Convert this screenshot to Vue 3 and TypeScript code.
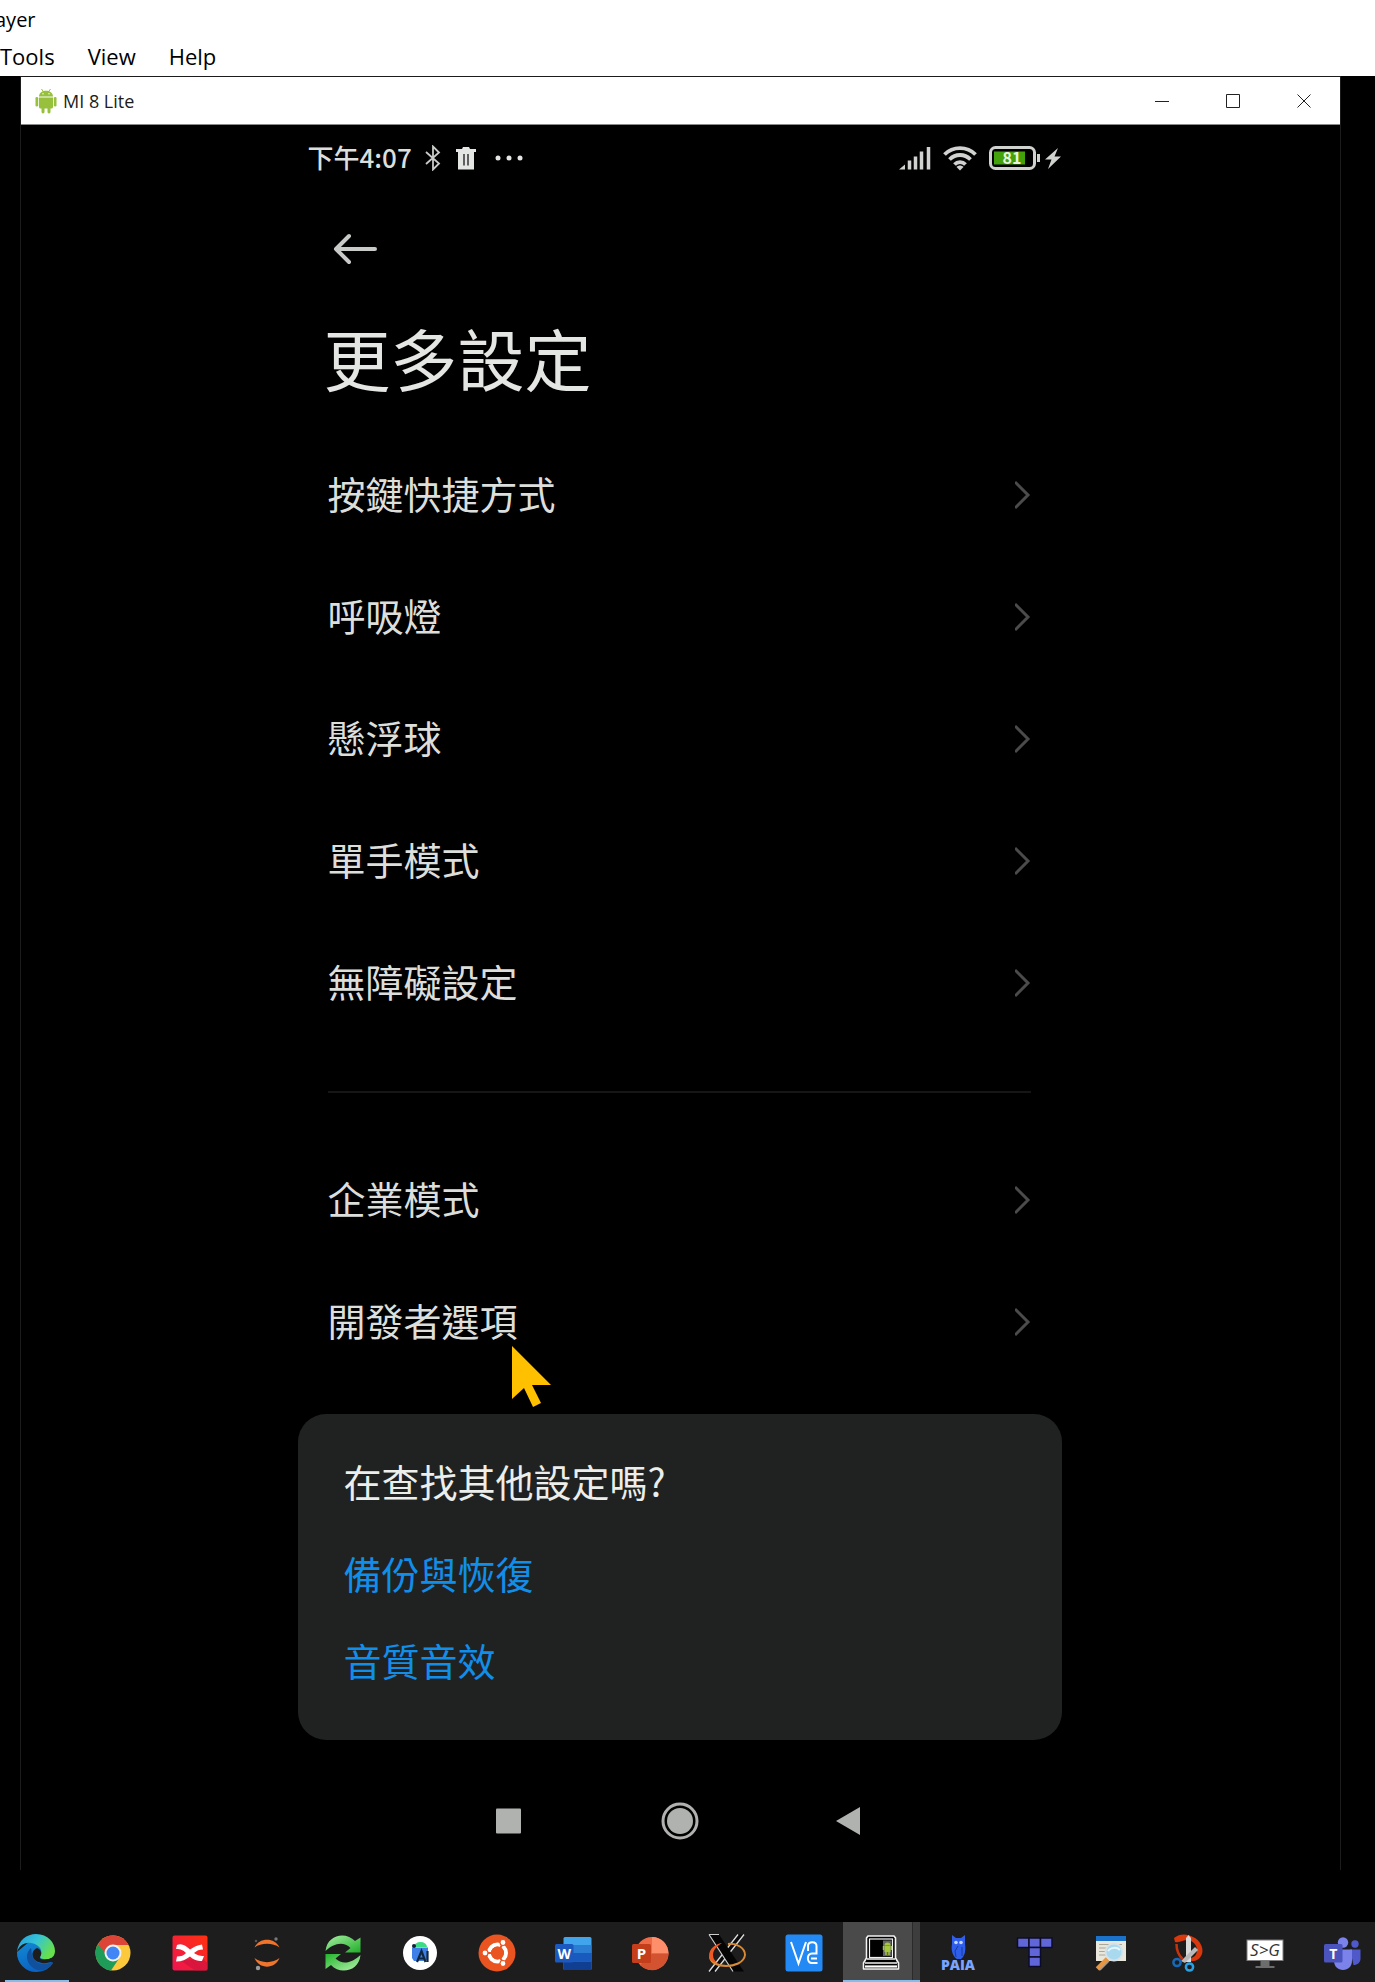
<script setup lang="ts">
interface MenuEntry {
  label: string
  pointed?: boolean
}

const appMenu: string[] = ['Tools', 'View', 'Help']

const groups: MenuEntry[][] = [
  [
    { label: '按鍵快捷方式' },
    { label: '呼吸燈' },
    { label: '懸浮球' },
    { label: '單手模式' },
    { label: '無障礙設定' },
  ],
  [{ label: '企業模式' }, { label: '開發者選項', pointed: true }],
]

const suggestions: string[] = ['備份與恢復', '音質音效']
</script>

<template>
  <div class="desktop">
    <header class="player">
      <div class="player-title">ayer</div>
      <nav class="player-menu">
        <button v-for="item in appMenu" :key="item" type="button">{{ item }}</button>
      </nav>
    </header>

    <main class="window">
      <div class="titlebar">
        <svg class="droid" viewBox="0 0 22 26" aria-hidden="true">
          <g fill="#97c03d">
            <path d="M4 8.500C4 0.800 18 0.800 18 8.500z" />
            <path d="M4 9.500h14v9.500a1.500 1.500 0 0 1-1.500 1.500h-11A1.500 1.500 0 0 1 4 19z" />
            <rect x="0.500" y="9" width="2.700" height="9.500" rx="1.300" />
            <rect x="18.800" y="9" width="2.700" height="9.500" rx="1.300" />
            <rect x="6.500" y="18" width="3" height="7.500" rx="1.400" />
            <rect x="12.500" y="18" width="3" height="7.500" rx="1.400" />
          </g>
          <path d="M6.500 1l1.800 2.500M15.500 1l-1.800 2.500" stroke="#97c03d" stroke-width="1" />
          <circle cx="8" cy="5.800" r="0.700" fill="#fff" />
          <circle cx="14" cy="5.800" r="0.700" fill="#fff" />
        </svg>
        <span class="window-name">MI 8 Lite</span>
        <div class="window-buttons">
          <button type="button" aria-label="Minimize">
            <svg viewBox="0 0 14 14"><path d="M0 7.500h14" /></svg>
          </button>
          <button type="button" aria-label="Maximize">
            <svg viewBox="0 0 14 14"><path d="M.5.500h13v13H.5z" /></svg>
          </button>
          <button type="button" aria-label="Close">
            <svg viewBox="0 0 14 14"><path d="M.5.500l13 13M13.500.500l-13 13" /></svg>
          </button>
        </div>
      </div>

      <div class="phone">
        <div class="status">
          <span class="clock">下午4:07</span>
          <svg class="bt" width="18" height="26" viewBox="0 0 18 26" aria-hidden="true">
            <path d="M2 7l13 11.500-6 6V1.500l6 6L2 19" fill="none" stroke="#c9cbc9" stroke-width="1.800" />
          </svg>
          <svg class="trash" width="22" height="24" viewBox="0 0 22 24" aria-hidden="true">
            <path d="M1 3h6l1-2h6l1 2h6v3H1z" fill="#e4e6e4" />
            <path d="M3 5h16v18.500H3z" fill="#e4e6e4" />
            <path d="M9 8v11.500M13 8v11.500" stroke="#333" stroke-width="1.500" />
          </svg>
          <svg class="dots" width="28" height="6" viewBox="0 0 28 6" aria-hidden="true">
            <g fill="#e4e6e4">
              <circle cx="3" cy="3" r="2.500" />
              <circle cx="14" cy="3" r="2.500" />
              <circle cx="25" cy="3" r="2.500" />
            </g>
          </svg>
          <div class="status-right">
            <svg width="32" height="24" viewBox="0 0 32 24" aria-hidden="true">
              <path d="M0 23.500l6-5v5z" fill="#d0d2d0" />
              <path d="M10.500 23.500v-9M16.500 23.500v-13M22.500 23.500V5.500M29.500 23.500V1" stroke="#d0d2d0" stroke-width="3.500" />
            </svg>
            <svg width="34" height="26" viewBox="0 0 34 26" aria-hidden="true">
              <g fill="none" stroke="#d0d2d0" stroke-width="3.800">
                <path d="M1.500 9.500C10 1 24 1 32.500 9.500" />
                <path d="M6.500 14.500c6-6 15-6 21 0" />
                <path d="M11.500 19.500c3-3.200 8-3.200 11 0" />
              </g>
              <path d="M17 25.500l-3.500-3.500c2-2 5-2 7 0z" fill="#d0d2d0" />
            </svg>
            <svg width="52" height="24" viewBox="0 0 52 24" aria-hidden="true">
              <rect x="1.500" y="1.500" width="44" height="21" rx="5" fill="none" stroke="#d0d2d0" stroke-width="3" />
              <rect x="5" y="5.500" width="31" height="13" fill="#43a10c" />
              <path d="M49.500 8v8" stroke="#d0d2d0" stroke-width="3" />
              <text x="23" y="17.500" text-anchor="middle" font-size="16" font-weight="700" fill="#e8f5e0">81</text>
            </svg>
            <svg width="16" height="24" viewBox="0 0 16 24" aria-hidden="true">
              <path d="M13 2L0 13.500h6.500L3 23 16 10.500H9.500z" fill="#d0d2d0" />
            </svg>
          </div>
        </div>

        <button class="back" type="button" aria-label="返回">
          <svg width="46" height="32" viewBox="0 0 46 32">
            <path d="M17 3L4 16l13 13M4 16h39" />
          </svg>
        </button>

        <h1>更多設定</h1>

        <ul v-for="(group, g) in groups" :key="g" class="group">
          <li v-for="entry in group" :key="entry.label">
            <a href="#">
              <span>{{ entry.label }}</span>
              <svg width="16" height="30" viewBox="0 0 16 30" aria-hidden="true">
                <path d="M0 2l13 13L0 28" />
              </svg>
            </a>
            <svg v-if="entry.pointed" class="pointer" width="40" height="62" viewBox="0 0 40 62" aria-hidden="true">
              <path d="M0 0v53l12-11 9 19 8-4-9-18h19z" fill="#ffc000" />
            </svg>
          </li>
        </ul>

        <section class="card">
          <h2>在查找其他設定嗎?</h2>
          <a v-for="s in suggestions" :key="s" href="#">{{ s }}</a>
        </section>

        <nav class="keys">
          <button type="button" aria-label="Recents">
            <svg viewBox="0 0 38 38"><rect x="6" y="6.500" width="25" height="25" rx="1" /></svg>
          </button>
          <button type="button" aria-label="Home">
            <svg viewBox="0 0 38 38">
              <circle cx="19" cy="19" r="13" />
              <circle class="ring" cx="19" cy="19" r="17" />
            </svg>
          </button>
          <button type="button" aria-label="Back">
            <svg viewBox="0 0 38 38"><path d="M4 19L28 5v28z" /></svg>
          </button>
        </nav>
      </div>
    </main>

    <footer class="taskbar">
      <button type="button" class="running" aria-label="Edge">
        <svg viewBox="0 0 40 40">
          <defs>
            <linearGradient id="edgeTop" x1="0" y1="0" x2="1" y2="0.500">
              <stop offset="0" stop-color="#249ad8" />
              <stop offset="0.500" stop-color="#35c3d8" />
              <stop offset="1" stop-color="#66e04c" />
            </linearGradient>
            <linearGradient id="edgeLow" x1="0" y1="0" x2="0.400" y2="1">
              <stop offset="0" stop-color="#1491d8" />
              <stop offset="1" stop-color="#0b62c0" />
            </linearGradient>
          </defs>
          <path d="M1 19a19 19 0 0 0 19 20c8 0 14-4 17-9l-8-4 8-8L20 3z" fill="url(#edgeLow)" />
          <path d="M1 19C2 7 11 1 20 1c12 0 19 9 19 17 0 6-5 9-10 8-4 0-6-1-4-4 2-6-3-11-10-12C8 9 3 13 1 19z" fill="url(#edgeTop)" />
          <path d="M15 15c-6 5-5 14 1 19 5 4 10 4 14 2 4-2 6-4 7-7-8 4-17 2-20-4-2-4-1-7-2-10z" fill="#11509c" />
          <path d="M21 15c-5 2-6 8-2 12 5 4 12 4 18 1l2-2-4-1c-3 2-8 2-10 1-2-1-1-2 0-4 1-3-1-6-4-7z" fill="#1d1d1d" />
        </svg>
      </button>
      <button type="button" aria-label="Chrome">
        <svg viewBox="0 0 40 40">
          <circle cx="20" cy="20" r="17.500" fill="#fcc93c" />
          <path d="M20 20L4.800 11.200A17.500 17.500 0 0 0 18 37.400L27 24z" fill="#1f9d58" />
          <path d="M20 20h-8L5 11A17.500 17.500 0 0 1 35.500 12H20z" fill="#db4437" />
          <circle cx="20" cy="20" r="8.500" fill="#f1f1f1" />
          <circle cx="20" cy="20" r="6.500" fill="#4285f4" />
        </svg>
      </button>
      <button type="button" aria-label="XMind">
        <svg viewBox="0 0 40 40">
          <defs>
            <linearGradient id="xm" x1="0" y1="1" x2="1" y2="0">
              <stop offset="0" stop-color="#ee1450" />
              <stop offset="1" stop-color="#ff3110" />
            </linearGradient>
          </defs>
          <rect x="2.500" y="2.500" width="35" height="35" rx="2" fill="url(#xm)" />
          <path d="M33 26l4.500 4v7.500H25L10 27z" fill="#c80f42" opacity="0.600" />
          <path d="M7 12c5-2 9 1 13 4.500 4-2.500 7-4.500 12-5l1 5c-4 0-6 1-9 3.500 3 2 5 3 10 3l-2 5c-5 0-8-1-12-4.500-4 3-8 5-14 5l1-5c4 0 7-1 9-3.500-3-3-5-4-10-4z" fill="#fff" />
        </svg>
      </button>
      <button type="button" aria-label="Jupyter">
        <svg viewBox="0 0 40 40">
          <path d="M7.500 14.500C12 4 28 4 32.500 14.500 26 9.500 14 9.500 7.500 14.500zM7.500 25C12 36.500 28 36.500 32.500 25 26 30.500 14 30.500 7.500 25z" fill="#f0742c" />
          <circle cx="29" cy="6" r="1.700" fill="#77787b" />
          <circle cx="9" cy="8" r="1.300" fill="#55565a" />
          <circle cx="11" cy="35" r="2.200" fill="#9a9b9d" />
        </svg>
      </button>
      <button type="button" aria-label="Sync">
        <svg viewBox="0 0 40 40">
          <defs>
            <linearGradient id="syncA" x1="0" y1="0" x2="1" y2="1">
              <stop offset="0" stop-color="#a9f0a4" />
              <stop offset="1" stop-color="#1fae28" />
            </linearGradient>
            <linearGradient id="syncB" x1="0" y1="0" x2="1" y2="1">
              <stop offset="0" stop-color="#22b52b" />
              <stop offset="1" stop-color="#b6f2ad" />
            </linearGradient>
          </defs>
          <path d="M2.500 18C4 1.500 23-2 32 8l5.500-3.500v15H22l5.500-4.500C20 7.500 10 11 2.500 18z" fill="url(#syncA)" />
          <path d="M37.500 22C36 38.500 17 42 8 32l-5.500 4V21H18l-5.500 4.500C20 33 30 29 37.500 22z" fill="url(#syncB)" />
        </svg>
      </button>
      <button type="button" aria-label="Android Studio">
        <svg viewBox="0 0 40 40">
          <circle cx="20" cy="20" r="17" fill="#fff" />
          <path d="M14 14a6.500 5 0 0 1 13 0z" fill="#3ddc84" />
          <path d="M12 14.500h16V27l-5 1H14l-2-3z" fill="#3f7fe8" />
          <circle cx="14" cy="13" r="2" fill="#123" />
          <path d="M17 29l4.500-11 4 11M18.500 25.500h6M27.500 18v11" fill="none" stroke="#10283f" stroke-width="2.200" />
        </svg>
      </button>
      <button type="button" aria-label="Ubuntu">
        <svg viewBox="0 0 40 40">
          <circle cx="20" cy="20" r="18.500" fill="#e95420" />
          <circle cx="20.500" cy="20" r="8.500" fill="none" stroke="#fff" stroke-width="4" />
          <path d="M20.500 20H4M20.500 20l9-16M20.500 20l9 16" stroke="#e95420" stroke-width="2" />
          <circle cx="20.500" cy="20" r="6.500" fill="#e95420" />
          <g fill="#fff" stroke="#e95420" stroke-width="1.200">
            <circle cx="8" cy="20" r="3" />
            <circle cx="26" cy="9.500" r="3" />
            <circle cx="26" cy="30.500" r="3" />
          </g>
        </svg>
      </button>
      <button type="button" aria-label="Word">
        <svg viewBox="0 0 40 40">
          <rect x="10.500" y="4" width="28" height="33" rx="1.500" fill="#41a5ee" />
          <path d="M10.500 12h28v8h-28z" fill="#2b7cd3" />
          <path d="M10.500 20h28v8.500h-28z" fill="#185abd" />
          <path d="M10.500 28.500h28V36a1 1 0 0 1-1 1h-26a1 1 0 0 1-1-1z" fill="#103f91" />
          <rect x="2" y="11" width="18.500" height="18.500" rx="1.500" fill="#1c59bf" />
          <text x="11.200" y="25.500" text-anchor="middle" font-size="14" font-weight="700" fill="#fff">W</text>
        </svg>
      </button>
      <button type="button" aria-label="PowerPoint">
        <svg viewBox="0 0 40 40">
          <circle cx="22" cy="20.500" r="16.500" fill="#ed6c47" />
          <path d="M22 4a16.500 16.500 0 0 1 16.500 16.500H22z" fill="#ff8f6b" />
          <path d="M22 20.500h16.500A16.500 16.500 0 0 1 10 32z" fill="#d35230" />
          <rect x="2" y="11" width="19" height="19" rx="1.500" fill="#c43e1c" />
          <text x="11.500" y="26" text-anchor="middle" font-size="15" font-weight="700" fill="#fff">P</text>
        </svg>
      </button>
      <button type="button" aria-label="X server">
        <svg viewBox="0 0 40 40">
          <path d="M31 1.500h6L8 38.500H2z" fill="#0a0a0a" />
          <path d="M31 1.500L2 38.500M37 1.500L8 38.500" stroke="#ddd" stroke-width="1.300" />
          <path d="M2 1.500h10l25 37H26z" fill="#050505" />
          <path d="M2 1.500L26 38.500M2 1.500h10" stroke="#ccc" stroke-width="1.200" />
          <path d="M21 11c9-1 17 4 17 11C37 30 27 33 19 33 11 33 4 30 3 24" fill="none" stroke="#d98a35" stroke-width="2" />
          <path d="M2 23c0-7 6-12 13-13-5 3-9 7-9 12 0 4 2 6 5 8-5-1-9-3-9-7z" fill="#ee5a24" />
        </svg>
      </button>
      <button type="button" aria-label="VNC">
        <svg viewBox="0 0 40 40">
          <rect x="1.500" y="1.500" width="37" height="37" rx="2.500" fill="#2389f5" />
          <path d="M7 9l7.500 21.500L22 9" fill="none" stroke="#fff" stroke-width="2" />
          <path d="M24 18v-5c0-5 8.500-5 8.500 0v7.500h-4.500c-5.500 0-5.500 9.500 0 9.500h5.500M27 25.500h6" fill="none" stroke="#fff" stroke-width="2" />
        </svg>
      </button>
      <button type="button" class="active" aria-label="Screen mirror">
        <svg viewBox="0 0 40 40">
          <path d="M7 3h26l1.500 2v20l3 5v6H2.500v-6l3-5V5z" fill="#000" stroke="#f2f2f2" stroke-width="1.600" stroke-linejoin="round" />
          <rect x="8.500" y="6" width="23" height="18.500" fill="#000" stroke="#f2f2f2" stroke-width="1.200" />
          <rect x="22" y="7.500" width="8.500" height="15.500" fill="#646464" />
          <path d="M4 30h32M6 26h28" stroke="#f2f2f2" stroke-width="1.600" />
          <path d="M4 33.500h32" stroke="#fff" stroke-width="2.200" />
          <path d="M23.500 13h6v6h-6zM23.500 12.500a3 3 0 0 1 6 0z" fill="#a4c639" />
          <path d="M25 18v4M28 18v4M22.500 13v4M30.500 13v4" stroke="#a4c639" stroke-width="1.400" />
        </svg>
      </button>
      <button type="button" aria-label="PAIA">
        <svg viewBox="0 0 40 40">
          <path d="M14 2l4 3h5l4-3v9c1 6 0 12-4 15h-4c-5-3-6-10-5-15z" fill="#2f5fea" />
          <circle cx="18" cy="9.500" r="1.800" fill="#c7d6ff" />
          <circle cx="23" cy="9.500" r="1.800" fill="#c7d6ff" />
          <path d="M20 13l-3 5 1 6M24 14v9" fill="none" stroke="#173a9e" stroke-width="1" />
          <text x="20" y="37" text-anchor="middle" font-size="14" font-weight="800" fill="#7ba4ff">PAIA</text>
        </svg>
      </button>
      <button type="button" aria-label="Tetris">
        <svg viewBox="0 0 40 40">
          <g fill="#6066d8" stroke="#0c0c2a" stroke-width="1.500">
            <rect x="2.500" y="5" width="11.500" height="9.500" />
            <rect x="14" y="5" width="11.500" height="9.500" />
            <rect x="25.500" y="5" width="11.500" height="9.500" />
            <rect x="14" y="14.500" width="11.500" height="9.500" />
            <rect x="14" y="24" width="11.500" height="9.500" />
          </g>
        </svg>
      </button>
      <button type="button" aria-label="Viewer">
        <svg viewBox="0 0 40 40">
          <rect x="5" y="3" width="30" height="25" fill="#e9e7dc" />
          <rect x="5" y="3" width="30" height="5" fill="#1b72c8" />
          <path d="M8 11.500h23M8 15h12M8 18.500h10M8 22h10" stroke="#aaa89c" stroke-width="1.200" />
          <circle cx="23" cy="19" r="8.500" fill="#a9d9ef" stroke="#d7e2e8" stroke-width="1.800" />
          <path d="M17 18c3-4 9-4 12-1" fill="none" stroke="#e4f6ff" stroke-width="2" />
          <path d="M16.500 26L6.500 36" stroke="#e9963e" stroke-width="5" />
          <path d="M18 28L9 37" stroke="#9a9a9a" stroke-width="1.500" />
        </svg>
      </button>
      <button type="button" aria-label="Snip">
        <svg viewBox="0 0 40 40">
          <path d="M6 5C12 0 20 1 25 4c7 3 11 11 9 17-2 5-6 8-12 7l-1-3c5 0 8-3 8-8 0-5-4-9-9-10-5 0-8 3-13 2z" fill="#d8380c" />
          <path d="M8.500 11c0 7 2 11 6 15" fill="none" stroke="#c5330c" stroke-width="2.500" />
          <path d="M18 29V5l2.500-3L23 5v24z" fill="#dadada" />
          <path d="M13 28l14-14 3 3-13 13z" fill="#b9b9b9" />
          <circle cx="9" cy="29.500" r="3.600" fill="none" stroke="#1668b8" stroke-width="2.500" />
          <circle cx="21.500" cy="34" r="3.600" fill="none" stroke="#2aa1e4" stroke-width="2.500" />
        </svg>
      </button>
      <button type="button" aria-label="S to G">
        <svg viewBox="0 0 40 40">
          <path d="M15.500 27h9v6h5v2h-19v-2h5z" fill="#6d6d6d" />
          <rect x="2" y="7" width="36" height="20.500" fill="#fff" stroke="#7d7d7d" stroke-width="1" />
          <text x="20" y="23" text-anchor="middle" font-size="17" font-style="italic" fill="#333">S&gt;G</text>
        </svg>
      </button>
      <button type="button" aria-label="Teams">
        <svg viewBox="0 0 40 40">
          <circle cx="21" cy="9.500" r="5.200" fill="#7b83eb" />
          <circle cx="33" cy="11" r="3.700" fill="#5059c9" />
          <path d="M28 16.500h10.500v9c0 4-3 6.500-7 6.500z" fill="#5059c9" />
          <path d="M12 16.500h18v11c0 6-4 9.500-9 9.500s-9-3.500-9-9.500z" fill="#7b83eb" />
          <rect x="2" y="11" width="18.500" height="18.500" rx="1.500" fill="#4b53bc" />
          <text x="11.200" y="25.500" text-anchor="middle" font-size="14" font-weight="700" fill="#fff">T</text>
        </svg>
      </button>
    </footer>
  </div>
</template>

<style>
body {
  background: #000;
}
</style>

<style scoped>
.desktop {
  display: flex;
  flex-direction: column;
  min-height: 100vh;
  background: #000;
  font-family: "Open Sans", "Noto Sans", "Noto Sans CJK TC", sans-serif;
  overflow: hidden;
}
.desktop * {
  box-sizing: border-box;
}
button {
  padding: 0;
  border: 0;
  background: none;
  color: inherit;
  font: inherit;
}
a {
  color: inherit;
  text-decoration: none;
}
svg {
  display: block;
  flex: none;
}
h1,
h2,
ul {
  margin: 0;
  padding: 0;
  font-weight: 400;
  list-style: none;
}

.player {
  padding-bottom: 4px;
  background: #fff;
  color: #000;
}
.player-title {
  margin-left: -5px;
  font-size: 20px;
  line-height: 40px;
}
.player-menu {
  display: flex;
  gap: 33px;
  font-size: 22px;
  line-height: 32px;
}

.window {
  margin: 0 34px 52px 20px;
  border: 1px solid #1c1c1c;
  border-bottom: 0;
}
.titlebar {
  display: flex;
  align-items: center;
  height: 48px;
  padding: 0 1px 0 14px;
  border-bottom: 1px solid #8a8a8a;
  background: #fff;
  color: #1c1c1c;
}
.droid {
  width: 22px;
  height: 26px;
}
.window-name {
  margin-left: 6px;
  font-size: 18px;
  line-height: 24px;
}
.window-buttons {
  display: flex;
  margin-left: auto;
}
.window-buttons button {
  display: grid;
  place-items: center;
  width: 71px;
  height: 46px;
}
.window-buttons svg {
  width: 14px;
  height: 14px;
  fill: none;
  stroke: #222;
}

.phone {
  width: calc(100% - 2px);
  max-width: 766px;
  margin: 0 auto;
  padding-right: 2px;
  color: #dcdedc;
  font-family: "Noto Sans CJK TC", sans-serif;
}
.status {
  display: flex;
  align-items: center;
  height: 66px;
  padding: 0 1px 0 10px;
}
.clock {
  padding-bottom: 2px;
  font-size: 26px;
  font-weight: 500;
  line-height: 40px;
}
.bt {
  margin-left: 12px;
}
.trash {
  margin-left: 13px;
}
.dots {
  margin-left: 18px;
}
.status-right {
  display: flex;
  align-items: center;
  gap: 12px;
  margin-left: auto;
}
.status-right svg:last-child {
  margin-left: -8px;
}
.back {
  display: flex;
  align-items: center;
  height: 50px;
  margin: 33px 0 0 34px;
}
.back svg {
  fill: none;
  stroke: #c8cac8;
  stroke-width: 4;
  stroke-linecap: round;
  stroke-linejoin: round;
}
h1 {
  margin: 38px 0 32px 26px;
  color: #e4e6e3;
  font-size: 67px;
  line-height: 90px;
}
.group {
  margin: 0 31px 0 30px;
}
.group + .group {
  margin-top: 47px;
  padding-top: 46px;
  border-top: 2px solid #161616;
}
.group li {
  position: relative;
}
.group a {
  display: flex;
  align-items: center;
  justify-content: space-between;
  height: 122px;
  font-size: 38px;
  line-height: 56px;
}
.group a span {
  padding-bottom: 4px;
}
.group a svg {
  fill: none;
  stroke: #4b4b4b;
  stroke-width: 3;
}
.pointer {
  position: absolute;
  left: 184px;
  top: 85px;
}
.card {
  display: flex;
  flex-direction: column;
  align-items: flex-start;
  gap: 31px;
  margin-top: 31px;
  padding: 39px 46px 52px;
  border-radius: 28px;
  background: #202221;
  font-size: 38px;
  line-height: 56px;
}
.card h2 {
  margin-bottom: 5px;
  color: #eceeec;
  font-size: 38px;
}
.card a {
  color: #118eea;
}
.keys {
  display: flex;
  justify-content: center;
  padding: 62px 0 30px;
}
.keys button {
  display: grid;
  place-items: center;
  width: 171px;
}
.keys svg {
  width: 38px;
  height: 38px;
  fill: #b0b2af;
}
.keys .ring {
  fill: none;
  stroke: #b0b2af;
  stroke-width: 3;
}

.taskbar {
  display: flex;
  height: 60px;
  margin: auto -5px 0 -2px;
  background: #1d1d1d;
}
.taskbar button {
  position: relative;
  display: grid;
  flex: 1;
  place-items: center;
  min-width: 0;
  padding-top: 2px;
}
.taskbar svg {
  width: 40px;
  height: 40px;
  overflow: visible;
}
.taskbar svg text {
  font-family: "Open Sans", sans-serif;
}
.taskbar .running::after,
.taskbar .active::after {
  position: absolute;
  right: 6px;
  bottom: 0;
  left: 7px;
  height: 2px;
  background: #85bdea;
  content: "";
}
.taskbar .active {
  border-left: 1px solid #1d1d1d;
  background: linear-gradient(to right, #4a4a4a 69px, #2a2a2a 69px, #2a2a2a 70px, #3d3d3d 70px);
}
.taskbar .active::after {
  right: 0;
  left: 0;
}
</style>
